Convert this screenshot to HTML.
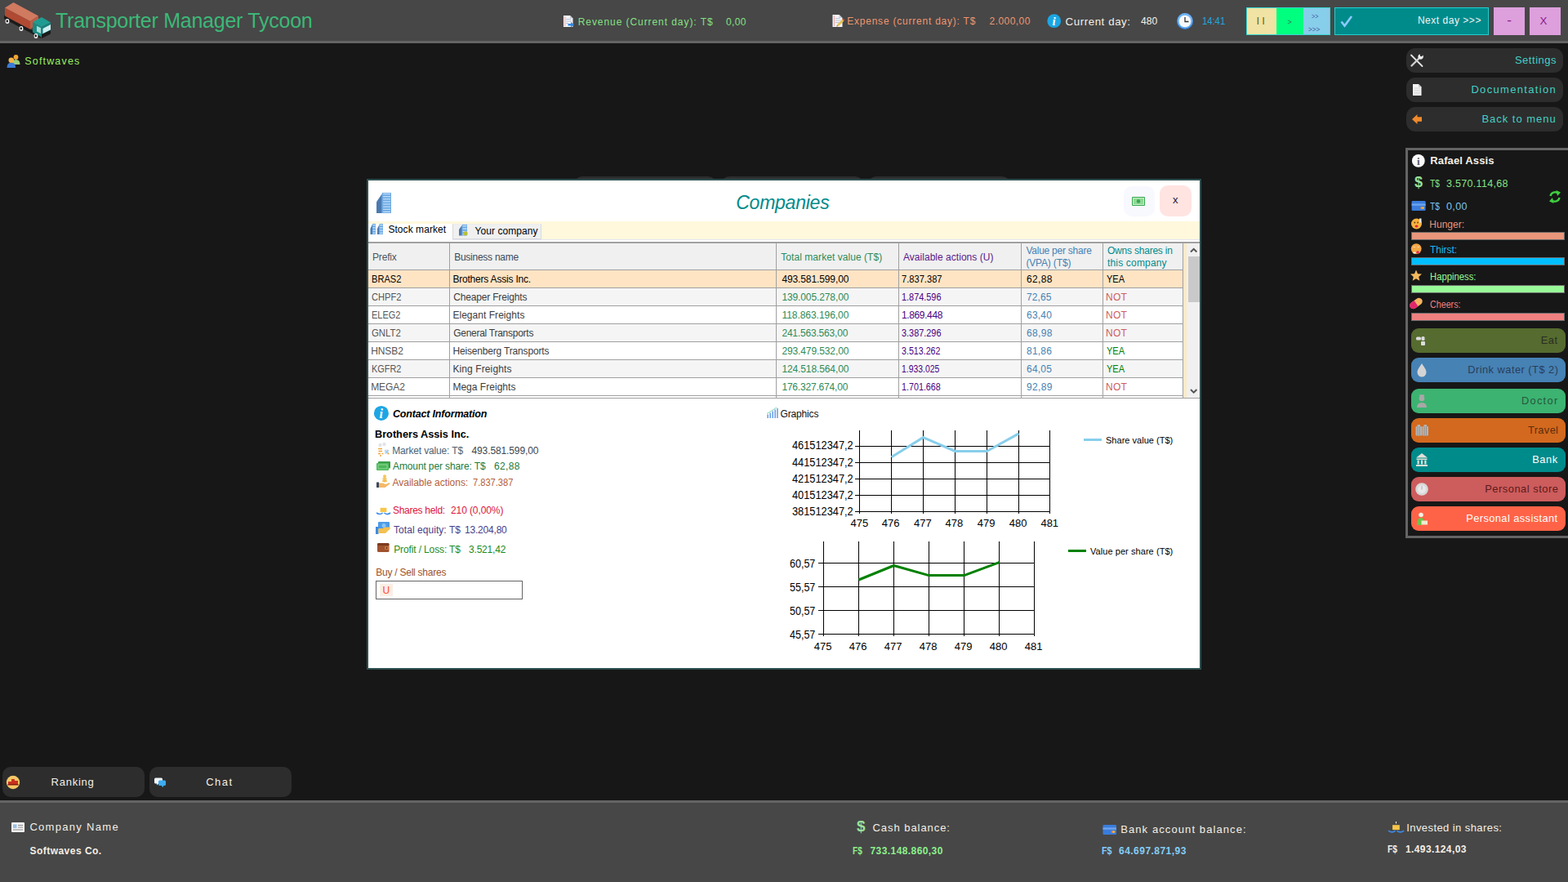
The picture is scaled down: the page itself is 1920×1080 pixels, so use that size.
<!DOCTYPE html>
<html lang="en"><head><meta charset="utf-8"><title>Transporter Manager Tycoon</title>
<style>
html,body{margin:0;padding:0}
body{width:1920px;height:1080px;overflow:hidden;background:#171717;position:relative;font-family:"Liberation Sans",sans-serif}
div,svg,span.t{position:absolute;display:block}
span.t{white-space:pre;line-height:20px;height:20px}
</style></head><body>
<div style="left:0px;top:0px;width:1920px;height:50px;background:#474747;"></div>
<div style="left:0px;top:50px;width:1920px;height:3px;background:#646464;"></div>
<span class="t" style="left:68.00px;top:15.34px;font-size:25px;color:#3cb878;letter-spacing:-0.252px;">Transporter Manager Tycoon</span>
<span class="t" style="left:707.70px;top:17.14px;font-size:12px;color:#84e184;letter-spacing:0.933px;">Revenue (Current day): T$</span>
<span class="t" style="left:889.00px;top:17.14px;font-size:12px;color:#84e184;letter-spacing:0.347px;">0,00</span>
<span class="t" style="left:1037.20px;top:16.34px;font-size:12px;color:#ee9670;letter-spacing:0.779px;">Expense (current day): T$</span>
<span class="t" style="left:1211.50px;top:16.34px;font-size:12px;color:#ee9670;letter-spacing:0.454px;">2.000,00</span>
<span class="t" style="left:1304.50px;top:17.19px;font-size:13.3px;color:#f4efe6;letter-spacing:0.578px;">Current day:</span>
<span class="t" style="left:1396.60px;top:16.29px;font-size:13.3px;color:#f4efe6;transform:scaleX(0.9099);transform-origin:0 50%;">480</span>
<span class="t" style="left:1471.80px;top:16.49px;font-size:13.3px;color:#22a7dc;transform:scaleX(0.8453);transform-origin:0 50%;">14:41</span>
<div style="left:1526px;top:9px;width:37px;height:34px;background:#f0e3a4;border:1px solid #38d6d0;border-right:0;box-sizing:border-box"></div>
<div style="left:1563px;top:9px;width:33px;height:34px;background:#00ff7f;border-top:1px solid #38d6d0;border-bottom:1px solid #38d6d0;box-sizing:border-box"></div>
<div style="left:1596px;top:9px;width:33px;height:34px;background:#87ceeb;border:1px solid #38d6d0;border-left:0;box-sizing:border-box"></div>
<div style="left:1634px;top:9px;width:189px;height:34px;background:#008b8b;border:1px solid #20d0d0;box-sizing:border-box"></div>
<div style="left:1829px;top:9px;width:38px;height:34px;background:#dda0dd;"></div>
<div style="left:1873px;top:9px;width:38px;height:34px;background:#dda0dd;"></div>
<span class="t" style="left:1538.50px;top:15.70px;font-size:13px;color:#5a6b22;letter-spacing:3.066px;">II</span>
<span class="t" style="left:1576.60px;top:16.68px;font-size:9px;color:#2f7a50;">&gt;</span>
<span class="t" style="left:1606.20px;top:10.08px;font-size:9px;color:#4a64a8;transform:scaleX(0.7950);transform-origin:0 50%;">&gt;&gt;</span>
<span class="t" style="left:1602.00px;top:25.58px;font-size:9px;color:#4a64a8;transform:scaleX(0.8996);transform-origin:0 50%;">&gt;&gt;&gt;</span>
<span class="t" style="left:1735.90px;top:15.34px;font-size:12px;color:#f4f4f4;letter-spacing:0.526px;">Next day &gt;&gt;&gt;</span>
<span class="t" style="left:1845.20px;top:15.11px;font-size:17px;color:#8b1a8b;">-</span>
<span class="t" style="left:1885.60px;top:15.99px;font-size:13.3px;color:#8b1a8b;">X</span>
<span class="t" style="left:30.30px;top:65.12px;font-size:12.5px;color:#98ee62;letter-spacing:1.160px;">Softwaves</span>
<div style="left:3px;top:939px;width:174px;height:37px;background:#2d2d2d;border-radius:10px"></div>
<div style="left:183px;top:939px;width:174px;height:37px;background:#2d2d2d;border-radius:10px"></div>
<span class="t" style="left:62.50px;top:948.20px;font-size:13px;color:#f4efe6;letter-spacing:0.766px;">Ranking</span>
<span class="t" style="left:252.20px;top:948.20px;font-size:13px;color:#f4efe6;letter-spacing:1.510px;">Chat</span>
<div style="left:0px;top:980px;width:1920px;height:3px;background:#646464;"></div>
<div style="left:0px;top:983px;width:1920px;height:97px;background:#474747;"></div>
<span class="t" style="left:36.40px;top:1003.20px;font-size:13px;color:#f4efe6;letter-spacing:1.306px;">Company Name</span>
<span class="t" style="left:36.40px;top:1032.34px;font-size:12px;color:#f4efe6;letter-spacing:0.481px;font-weight:bold;">Softwaves Co.</span>
<span class="t" style="left:1068.50px;top:1003.95px;font-size:13px;color:#f4efe6;letter-spacing:0.948px;">Cash balance:</span>
<span class="t" style="left:1044.35px;top:1031.94px;font-size:12px;color:#8cf08c;transform:scaleX(0.8413);transform-origin:0 50%;font-weight:bold;">F$</span>
<span class="t" style="left:1065.50px;top:1031.94px;font-size:12px;color:#8cf08c;letter-spacing:0.421px;font-weight:bold;">733.148.860,30</span>
<span class="t" style="left:1372.20px;top:1006.20px;font-size:13px;color:#f4efe6;letter-spacing:1.095px;">Bank account balance:</span>
<span class="t" style="left:1349.40px;top:1032.14px;font-size:12px;color:#84cdf5;transform:scaleX(0.8960);transform-origin:0 50%;font-weight:bold;">F$</span>
<span class="t" style="left:1370.00px;top:1032.14px;font-size:12px;color:#84cdf5;letter-spacing:0.471px;font-weight:bold;">64.697.871,93</span>
<span class="t" style="left:1722.20px;top:1003.95px;font-size:13px;color:#f4efe6;letter-spacing:0.426px;">Invested in shares:</span>
<span class="t" style="left:1699.35px;top:1030.29px;font-size:12px;color:#f4efe6;transform:scaleX(0.8549);transform-origin:0 50%;font-weight:bold;">F$</span>
<span class="t" style="left:1721.00px;top:1030.29px;font-size:12px;color:#f4efe6;letter-spacing:0.393px;font-weight:bold;">1.493.124,03</span>
<div style="left:1722px;top:59px;width:192px;height:30px;background:#2d2d2d;border-radius:11px"></div>
<span class="t" style="left:1854.90px;top:63.50px;font-size:13px;color:#45cfc4;letter-spacing:0.531px;">Settings</span>
<div style="left:1722px;top:95px;width:192px;height:30px;background:#2d2d2d;border-radius:11px"></div>
<span class="t" style="left:1801.40px;top:99.50px;font-size:13px;color:#45cfc4;letter-spacing:1.329px;">Documentation</span>
<div style="left:1722px;top:131px;width:192px;height:30px;background:#2d2d2d;border-radius:11px"></div>
<span class="t" style="left:1814.40px;top:135.50px;font-size:13px;color:#45cfc4;letter-spacing:0.991px;">Back to menu</span>
<div style="left:1721px;top:181px;width:210px;height:478px;background:#171717;border:3px solid #646464;box-sizing:border-box"></div>
<span class="t" style="left:1751.30px;top:187.20px;font-size:13px;color:#f4efe6;letter-spacing:0.123px;font-weight:bold;">Rafael Assis</span>
<span class="t" style="left:1751.00px;top:214.57px;font-size:12.5px;color:#86e386;transform:scaleX(0.8151);transform-origin:0 50%;">T$</span>
<span class="t" style="left:1771.00px;top:214.57px;font-size:12.5px;color:#86e386;letter-spacing:0.308px;">3.570.114,68</span>
<span class="t" style="left:1751.00px;top:242.67px;font-size:12.5px;color:#7cc4f2;transform:scaleX(0.8151);transform-origin:0 50%;">T$</span>
<span class="t" style="left:1771.00px;top:242.67px;font-size:12.5px;color:#7cc4f2;letter-spacing:0.369px;">0,00</span>
<span class="t" style="left:1750.20px;top:264.64px;font-size:12px;color:#e9967a;letter-spacing:0.049px;">Hunger:</span>
<span class="t" style="left:1751.00px;top:295.64px;font-size:12px;color:#1cb8f0;letter-spacing:-0.024px;">Thirst:</span>
<span class="t" style="left:1751.00px;top:328.64px;font-size:12px;color:#98fb98;transform:scaleX(0.9409);transform-origin:0 50%;">Happiness:</span>
<span class="t" style="left:1751.00px;top:362.74px;font-size:12px;color:#f08080;transform:scaleX(0.8920);transform-origin:0 50%;">Cheers:</span>
<div style="left:1728px;top:284px;width:188px;height:10px;background:#e9967a;border:1px solid #6a6a6a;box-sizing:border-box"></div>
<div style="left:1728px;top:315px;width:188px;height:10px;background:#00bfff;border:1px solid #6a6a6a;box-sizing:border-box"></div>
<div style="left:1728px;top:349px;width:188px;height:10px;background:#98fb98;border:1px solid #6a6a6a;box-sizing:border-box"></div>
<div style="left:1728px;top:383px;width:188px;height:10px;background:#f08080;border:1px solid #6a6a6a;box-sizing:border-box"></div>
<div style="left:1728px;top:402px;width:189px;height:30px;background:#556b2f;border-radius:9px"></div>
<span class="t" style="left:1886.70px;top:406.56px;font-size:12.8px;color:#2a2e22;letter-spacing:0.631px;">Eat</span>
<div style="left:1728px;top:438px;width:189px;height:30px;background:#4682b4;border-radius:9px"></div>
<span class="t" style="left:1797.20px;top:442.56px;font-size:12.8px;color:#2a3e58;letter-spacing:0.493px;">Drink water (T$ 2)</span>
<div style="left:1728px;top:476px;width:189px;height:30px;background:#3cb371;border-radius:9px"></div>
<span class="t" style="left:1862.90px;top:480.56px;font-size:12.8px;color:#26573c;letter-spacing:1.315px;">Doctor</span>
<div style="left:1728px;top:512px;width:189px;height:30px;background:#d2691e;border-radius:9px"></div>
<span class="t" style="left:1871.00px;top:516.56px;font-size:12.8px;color:#5a2d0c;letter-spacing:0.377px;">Travel</span>
<div style="left:1728px;top:548px;width:189px;height:30px;background:#008b8b;border-radius:9px"></div>
<span class="t" style="left:1876.20px;top:552.56px;font-size:12.8px;color:#ffffff;letter-spacing:0.603px;">Bank</span>
<div style="left:1728px;top:584px;width:189px;height:30px;background:#cd5c5c;border-radius:9px"></div>
<span class="t" style="left:1818.20px;top:588.56px;font-size:12.8px;color:#5c1a1a;letter-spacing:0.559px;">Personal store</span>
<div style="left:1728px;top:620px;width:189px;height:30px;background:#ff6347;border-radius:9px"></div>
<span class="t" style="left:1795.20px;top:624.56px;font-size:12.8px;color:#ffffff;letter-spacing:0.436px;">Personal assistant</span>
<div style="left:703px;top:216px;width:174px;height:37px;background:#2d2d2d;border-radius:10px"></div>
<div style="left:883px;top:216px;width:174px;height:37px;background:#2d2d2d;border-radius:10px"></div>
<div style="left:1063px;top:216px;width:174px;height:37px;background:#2d2d2d;border-radius:10px"></div>
<div style="left:449px;top:219px;width:1022px;height:601px;background:#ffffff;border:2px solid #2f4f4f;box-sizing:border-box"></div>
<span class="t" style="left:901.20px;top:237.63px;font-size:23px;color:#008b8b;letter-spacing:-0.230px;font-style:italic;">Companies</span>
<div style="left:1375.5px;top:227.5px;width:38.5px;height:37.5px;background:#f8f8ff;border-radius:10px"></div>
<div style="left:1420px;top:227px;width:39px;height:38px;background:#ffe4e1;border-radius:10px"></div>
<span class="t" style="left:1436.00px;top:235.40px;font-size:13px;color:#1a1a3a;">x</span>
<div style="left:451px;top:271px;width:1018px;height:22px;background:#fff8dc;"></div>
<div style="left:451px;top:274px;width:103px;height:22px;background:#ffffff;"></div>
<div style="left:554px;top:274px;width:109px;height:19px;background:#f0f0f0;border:1px solid #d9d9d9;border-top-color:#ececec;box-sizing:border-box"></div>
<div style="left:451px;top:293px;width:1018px;height:3px;background:#ffffff;"></div>
<div style="left:554px;top:293px;width:915px;height:1px;background:#e4e6f2;"></div>
<span class="t" style="left:475.40px;top:270.94px;font-size:12px;color:#000;letter-spacing:0.061px;">Stock market</span>
<span class="t" style="left:581.60px;top:273.04px;font-size:12px;color:#000;letter-spacing:0.065px;">Your company</span>
<div style="left:451px;top:296px;width:1018px;height:2px;background:#a0a0a0;"></div>
<div style="left:451px;top:298px;width:998px;height:32px;background:#f0f0f0;"></div>
<div style="left:451px;top:331px;width:998px;height:21px;background:#ffe4c4;"></div>
<div style="left:451px;top:352px;width:998px;height:1px;background:#a0a0a0;"></div>
<span class="t" style="left:455.00px;top:332.04px;font-size:12px;color:#000;transform:scaleX(0.9229);transform-origin:0 50%;">BRAS2</span>
<span class="t" style="left:554.40px;top:332.04px;font-size:12px;color:#000;letter-spacing:-0.199px;">Brothers Assis Inc.</span>
<span class="t" style="left:957.40px;top:332.04px;font-size:12px;color:#000;letter-spacing:-0.109px;">493.581.599,00</span>
<span class="t" style="left:1104.00px;top:332.04px;font-size:12px;color:#000;transform:scaleX(0.9273);transform-origin:0 50%;">7.837.387</span>
<span class="t" style="left:1257.00px;top:332.04px;font-size:12px;color:#000;letter-spacing:0.342px;">62,88</span>
<span class="t" style="left:1354.80px;top:332.04px;font-size:12px;color:#000;transform:scaleX(0.9178);transform-origin:0 50%;">YEA</span>
<div style="left:451px;top:353px;width:998px;height:21px;background:#f5f5f5;"></div>
<div style="left:451px;top:374px;width:998px;height:1px;background:#a0a0a0;"></div>
<span class="t" style="left:455.00px;top:354.04px;font-size:12px;color:#555555;transform:scaleX(0.9232);transform-origin:0 50%;">CHPF2</span>
<span class="t" style="left:555.20px;top:354.04px;font-size:12px;color:#3c3c3c;letter-spacing:-0.168px;">Cheaper Freights</span>
<span class="t" style="left:957.40px;top:354.04px;font-size:12px;color:#2e8b57;letter-spacing:-0.109px;">139.005.278,00</span>
<span class="t" style="left:1104.00px;top:354.04px;font-size:12px;color:#4b0082;transform:scaleX(0.9083);transform-origin:0 50%;">1.874.596</span>
<span class="t" style="left:1257.00px;top:354.04px;font-size:12px;color:#4682b4;letter-spacing:0.092px;">72,65</span>
<span class="t" style="left:1354.00px;top:354.04px;font-size:12px;color:#cd5c5c;letter-spacing:0.278px;">NOT</span>
<div style="left:451px;top:375px;width:998px;height:21px;background:#ffffff;"></div>
<div style="left:451px;top:396px;width:998px;height:1px;background:#a0a0a0;"></div>
<span class="t" style="left:455.00px;top:376.04px;font-size:12px;color:#555555;transform:scaleX(0.9122);transform-origin:0 50%;">ELEG2</span>
<span class="t" style="left:554.40px;top:376.04px;font-size:12px;color:#3c3c3c;letter-spacing:0.041px;">Elegant Freights</span>
<span class="t" style="left:957.40px;top:376.04px;font-size:12px;color:#2e8b57;letter-spacing:-0.041px;">118.863.196,00</span>
<span class="t" style="left:1104.00px;top:376.04px;font-size:12px;color:#4b0082;letter-spacing:-0.374px;">1.869.448</span>
<span class="t" style="left:1257.00px;top:376.04px;font-size:12px;color:#4682b4;letter-spacing:0.217px;">63,40</span>
<span class="t" style="left:1354.00px;top:376.04px;font-size:12px;color:#cd5c5c;letter-spacing:0.278px;">NOT</span>
<div style="left:451px;top:397px;width:998px;height:21px;background:#f5f5f5;"></div>
<div style="left:451px;top:418px;width:998px;height:1px;background:#a0a0a0;"></div>
<span class="t" style="left:455.00px;top:398.04px;font-size:12px;color:#555555;transform:scaleX(0.9490);transform-origin:0 50%;">GNLT2</span>
<span class="t" style="left:555.20px;top:398.04px;font-size:12px;color:#3c3c3c;letter-spacing:-0.266px;">General Transports</span>
<span class="t" style="left:957.40px;top:398.04px;font-size:12px;color:#2e8b57;letter-spacing:-0.186px;">241.563.563,00</span>
<span class="t" style="left:1104.00px;top:398.04px;font-size:12px;color:#4b0082;transform:scaleX(0.9083);transform-origin:0 50%;">3.387.296</span>
<span class="t" style="left:1257.00px;top:398.04px;font-size:12px;color:#4682b4;letter-spacing:0.342px;">68,98</span>
<span class="t" style="left:1354.00px;top:398.04px;font-size:12px;color:#cd5c5c;letter-spacing:0.278px;">NOT</span>
<div style="left:451px;top:419px;width:998px;height:21px;background:#ffffff;"></div>
<div style="left:451px;top:440px;width:998px;height:1px;background:#a0a0a0;"></div>
<span class="t" style="left:454.20px;top:420.04px;font-size:12px;color:#555555;letter-spacing:-0.079px;">HNSB2</span>
<span class="t" style="left:554.40px;top:420.04px;font-size:12px;color:#3c3c3c;letter-spacing:-0.170px;">Heisenberg Transports</span>
<span class="t" style="left:957.40px;top:420.04px;font-size:12px;color:#2e8b57;letter-spacing:-0.109px;">293.479.532,00</span>
<span class="t" style="left:1104.00px;top:420.04px;font-size:12px;color:#4b0082;transform:scaleX(0.8896);transform-origin:0 50%;">3.513.262</span>
<span class="t" style="left:1257.00px;top:420.04px;font-size:12px;color:#4682b4;letter-spacing:0.217px;">81,86</span>
<span class="t" style="left:1354.80px;top:420.04px;font-size:12px;color:#008000;transform:scaleX(0.9178);transform-origin:0 50%;">YEA</span>
<div style="left:451px;top:441px;width:998px;height:21px;background:#f5f5f5;"></div>
<div style="left:451px;top:462px;width:998px;height:1px;background:#a0a0a0;"></div>
<span class="t" style="left:455.00px;top:442.04px;font-size:12px;color:#555555;transform:scaleX(0.9077);transform-origin:0 50%;">KGFR2</span>
<span class="t" style="left:554.40px;top:442.04px;font-size:12px;color:#3c3c3c;letter-spacing:0.108px;">King Freights</span>
<span class="t" style="left:957.40px;top:442.04px;font-size:12px;color:#2e8b57;letter-spacing:-0.109px;">124.518.564,00</span>
<span class="t" style="left:1104.00px;top:442.04px;font-size:12px;color:#4b0082;transform:scaleX(0.8675);transform-origin:0 50%;">1.933.025</span>
<span class="t" style="left:1257.00px;top:442.04px;font-size:12px;color:#4682b4;letter-spacing:0.217px;">64,05</span>
<span class="t" style="left:1354.80px;top:442.04px;font-size:12px;color:#008000;transform:scaleX(0.9178);transform-origin:0 50%;">YEA</span>
<div style="left:451px;top:463px;width:998px;height:21px;background:#ffffff;"></div>
<div style="left:451px;top:484px;width:998px;height:1px;background:#a0a0a0;"></div>
<span class="t" style="left:454.20px;top:464.04px;font-size:12px;color:#555555;letter-spacing:-0.079px;">MEGA2</span>
<span class="t" style="left:554.40px;top:464.04px;font-size:12px;color:#3c3c3c;letter-spacing:0.025px;">Mega Freights</span>
<span class="t" style="left:957.40px;top:464.04px;font-size:12px;color:#2e8b57;letter-spacing:-0.186px;">176.327.674,00</span>
<span class="t" style="left:1104.00px;top:464.04px;font-size:12px;color:#4b0082;transform:scaleX(0.8953);transform-origin:0 50%;">1.701.668</span>
<span class="t" style="left:1257.00px;top:464.04px;font-size:12px;color:#4682b4;letter-spacing:0.342px;">92,89</span>
<span class="t" style="left:1354.00px;top:464.04px;font-size:12px;color:#cd5c5c;letter-spacing:0.278px;">NOT</span>
<div style="left:451px;top:485px;width:998px;height:2px;background:#ffffff;"></div>
<div style="left:550px;top:298px;width:1px;height:189px;background:#a0a0a0;"></div>
<div style="left:950px;top:298px;width:1px;height:189px;background:#a0a0a0;"></div>
<div style="left:1100px;top:298px;width:1px;height:189px;background:#a0a0a0;"></div>
<div style="left:1250px;top:298px;width:1px;height:189px;background:#a0a0a0;"></div>
<div style="left:1350px;top:298px;width:1px;height:189px;background:#a0a0a0;"></div>
<div style="left:1448px;top:298px;width:1px;height:189px;background:#a0a0a0;"></div>
<div style="left:451px;top:330px;width:998px;height:1px;background:#a0a0a0;"></div>
<div style="left:451px;top:487px;width:1018px;height:1px;background:#a0a0a0;"></div>
<div style="left:1449px;top:298px;width:4px;height:189px;background:#ffe9c8;"></div>
<div style="left:1453px;top:298px;width:16px;height:189px;background:#f0f0f0;"></div>
<div style="left:1454.5px;top:314px;width:14.5px;height:56px;background:#c9c9c9;"></div>
<svg style="left:1453px;top:298px" width="16" height="16" viewBox="0 0 16 16"><path d="M5 10.5 L8.7 6.8 L12.4 10.5" fill="none" stroke="#555" stroke-width="2"/></svg>
<svg style="left:1453px;top:471px" width="16" height="16" viewBox="0 0 16 16"><path d="M5 6 L8.7 9.7 L12.4 6" fill="none" stroke="#555" stroke-width="2"/></svg>
<span class="t" style="left:456.00px;top:304.84px;font-size:12px;color:#4a5560;letter-spacing:-0.178px;">Prefix</span>
<span class="t" style="left:556.20px;top:304.84px;font-size:12px;color:#3c4a58;letter-spacing:-0.254px;">Business name</span>
<span class="t" style="left:956.30px;top:304.84px;font-size:12px;color:#2e8b57;letter-spacing:0.054px;">Total market value (T$)</span>
<span class="t" style="left:1106.00px;top:304.84px;font-size:12px;color:#5a1a8a;letter-spacing:0.029px;">Available actions (U)</span>
<span class="t" style="left:1256.40px;top:297.14px;font-size:12px;color:#4682b4;letter-spacing:-0.239px;">Value per share</span>
<span class="t" style="left:1256.40px;top:312.04px;font-size:12px;color:#4682b4;letter-spacing:-0.161px;">(VPA) (T$)</span>
<span class="t" style="left:1356.00px;top:297.14px;font-size:12px;color:#008b8b;letter-spacing:-0.216px;">Owns shares in</span>
<span class="t" style="left:1356.00px;top:312.04px;font-size:12px;color:#008b8b;letter-spacing:0.172px;">this company</span>
<span class="t" style="left:481.00px;top:496.97px;font-size:12.5px;color:#000;letter-spacing:-0.183px;font-weight:bold;font-style:italic;">Contact Information</span>
<span class="t" style="left:459.30px;top:522.12px;font-size:13.5px;color:#000;transform:scaleX(0.9413);transform-origin:0 50%;font-weight:bold;">Brothers Assis Inc.</span>
<span class="t" style="left:480.20px;top:541.64px;font-size:12px;color:#4a6274;letter-spacing:-0.150px;">Market value: T$</span>
<span class="t" style="left:577.50px;top:541.64px;font-size:12px;color:#3c4650;letter-spacing:-0.117px;">493.581.599,00</span>
<span class="t" style="left:481.00px;top:561.29px;font-size:12px;color:#1e7a3c;letter-spacing:-0.118px;">Amount per share: T$</span>
<span class="t" style="left:605.00px;top:561.29px;font-size:12px;color:#1e7a3c;letter-spacing:0.342px;">62,88</span>
<span class="t" style="left:480.60px;top:580.94px;font-size:12px;color:#b5603a;letter-spacing:-0.034px;">Available actions:</span>
<span class="t" style="left:579.00px;top:580.94px;font-size:12px;color:#b5603a;transform:scaleX(0.9235);transform-origin:0 50%;">7.837.387</span>
<span class="t" style="left:481.00px;top:615.29px;font-size:12px;color:#dc143c;letter-spacing:-0.290px;">Shares held:</span>
<span class="t" style="left:552.00px;top:615.29px;font-size:12px;color:#dc143c;letter-spacing:-0.097px;">210 (0,00%)</span>
<span class="t" style="left:482.00px;top:638.74px;font-size:12px;color:#483d8b;letter-spacing:0.055px;">Total equity: T$</span>
<span class="t" style="left:569.00px;top:638.74px;font-size:12px;color:#483d8b;letter-spacing:-0.199px;">13.204,80</span>
<span class="t" style="left:482.20px;top:662.54px;font-size:12px;color:#1c8c1c;letter-spacing:-0.126px;">Profit / Loss: T$</span>
<span class="t" style="left:574.00px;top:662.54px;font-size:12px;color:#1c8c1c;letter-spacing:-0.188px;">3.521,42</span>
<span class="t" style="left:460.20px;top:690.94px;font-size:12px;color:#a0522d;letter-spacing:-0.240px;">Buy / Sell shares</span>
<div style="left:460px;top:711px;width:180px;height:23px;background:#ffffff;border:1px solid #646464;box-sizing:border-box"></div>
<div style="left:465px;top:715px;width:16px;height:15px;background:#faeee4;"></div>
<span class="t" style="left:468.50px;top:713.44px;font-size:12px;color:#ff4a2a;">U</span>
<span class="t" style="left:955.50px;top:496.64px;font-size:12px;color:#111;letter-spacing:-0.162px;">Graphics</span>
<svg style="left:0;top:0" width="1920" height="1080" viewBox="0 0 1920 1080"><rect x="1052" y="527" width="1" height="102" fill="#000"/><rect x="1091" y="527" width="1" height="102" fill="#000"/><rect x="1130" y="527" width="1" height="102" fill="#000"/><rect x="1169" y="527" width="1" height="102" fill="#000"/><rect x="1208" y="527" width="1" height="102" fill="#000"/><rect x="1247" y="527" width="1" height="102" fill="#000"/><rect x="1285" y="527" width="1" height="102" fill="#000"/><rect x="1047" y="546" width="239" height="1" fill="#000"/><rect x="1047" y="566" width="239" height="1" fill="#000"/><rect x="1047" y="586" width="239" height="1" fill="#000"/><rect x="1047" y="606" width="239" height="1" fill="#000"/><rect x="1047" y="626" width="239" height="1" fill="#000"/><polyline points="1091.5,559.75 1130.5,535.6 1169.5,552.5 1208.5,552.5 1247.5,530.9" fill="none" stroke="#87ceeb" stroke-width="3" stroke-linejoin="round"/><rect x="1327" y="537" width="22" height="3" fill="#87ceeb"/><rect x="1008" y="663" width="1" height="116" fill="#000"/><rect x="1051" y="663" width="1" height="116" fill="#000"/><rect x="1094" y="663" width="1" height="116" fill="#000"/><rect x="1137" y="663" width="1" height="116" fill="#000"/><rect x="1180" y="663" width="1" height="116" fill="#000"/><rect x="1223" y="663" width="1" height="116" fill="#000"/><rect x="1266" y="663" width="1" height="116" fill="#000"/><rect x="1002" y="689" width="265" height="1" fill="#000"/><rect x="1002" y="718" width="265" height="1" fill="#000"/><rect x="1002" y="747" width="265" height="1" fill="#000"/><rect x="1002" y="776" width="265" height="1" fill="#000"/><polyline points="1051.5,710 1094.5,692.5 1137.5,704.6 1180.5,704.6 1223.5,688.7" fill="none" stroke="#008000" stroke-width="3" stroke-linejoin="round"/><rect x="1308" y="673" width="22" height="3" fill="#008000"/></svg>
<span class="t" style="left:970.00px;top:535.35px;font-size:14px;color:#000;transform:scaleX(0.9135);transform-origin:0 50%;">461512347,2</span>
<span class="t" style="left:970.00px;top:556.05px;font-size:14px;color:#000;transform:scaleX(0.9135);transform-origin:0 50%;">441512347,2</span>
<span class="t" style="left:970.00px;top:576.05px;font-size:14px;color:#000;transform:scaleX(0.9135);transform-origin:0 50%;">421512347,2</span>
<span class="t" style="left:970.00px;top:596.05px;font-size:14px;color:#000;transform:scaleX(0.9135);transform-origin:0 50%;">401512347,2</span>
<span class="t" style="left:970.00px;top:616.05px;font-size:14px;color:#000;transform:scaleX(0.9135);transform-origin:0 50%;">381512347,2</span>
<span class="t" style="left:1041.60px;top:631.20px;font-size:13px;color:#000;">475</span>
<span class="t" style="left:1079.87px;top:631.20px;font-size:13px;color:#000;">476</span>
<span class="t" style="left:1118.94px;top:631.20px;font-size:13px;color:#000;">477</span>
<span class="t" style="left:1157.61px;top:631.20px;font-size:13px;color:#000;">478</span>
<span class="t" style="left:1196.68px;top:631.20px;font-size:13px;color:#000;">479</span>
<span class="t" style="left:1235.75px;top:631.20px;font-size:13px;color:#000;">480</span>
<span class="t" style="left:1274.42px;top:631.20px;font-size:13px;color:#000;">481</span>
<span class="t" style="left:967.30px;top:679.90px;font-size:14px;color:#000;transform:scaleX(0.8937);transform-origin:0 50%;">60,57</span>
<span class="t" style="left:967.30px;top:709.05px;font-size:14px;color:#000;transform:scaleX(0.8937);transform-origin:0 50%;">55,57</span>
<span class="t" style="left:967.30px;top:738.15px;font-size:14px;color:#000;transform:scaleX(0.8937);transform-origin:0 50%;">50,57</span>
<span class="t" style="left:967.30px;top:767.15px;font-size:14px;color:#000;transform:scaleX(0.8937);transform-origin:0 50%;">45,57</span>
<span class="t" style="left:996.80px;top:781.90px;font-size:13px;color:#000;">475</span>
<span class="t" style="left:1039.80px;top:781.90px;font-size:13px;color:#000;">476</span>
<span class="t" style="left:1082.80px;top:781.90px;font-size:13px;color:#000;">477</span>
<span class="t" style="left:1125.80px;top:781.90px;font-size:13px;color:#000;">478</span>
<span class="t" style="left:1168.80px;top:781.90px;font-size:13px;color:#000;">479</span>
<span class="t" style="left:1211.80px;top:781.90px;font-size:13px;color:#000;">480</span>
<span class="t" style="left:1254.80px;top:781.90px;font-size:13px;color:#000;">481</span>
<span class="t" style="left:1354.00px;top:528.69px;font-size:11px;color:#000;letter-spacing:0.024px;">Share value (T$)</span>
<span class="t" style="left:1335.00px;top:664.89px;font-size:11px;color:#000;letter-spacing:0.064px;">Value per share (T$)</span>
<span class="t" style="left:1732.00px;top:212.66px;font-size:18px;color:#9be09b;font-weight:bold;">$</span>
<span class="t" style="left:1049.00px;top:1002.42px;font-size:19px;color:#9be09b;font-weight:bold;">$</span>
<svg style="left:0;top:0" width="1920" height="1080" viewBox="0 0 1920 1080"><g>
<polygon points="5,18.5 50,42.5 50,47 5,23" fill="#1b1b1b"/>
<polygon points="6,9.5 37,26 37,36 6,19.5" fill="#b04a32"/>
<polygon points="6,9.5 16.5,3 47,19.5 37,26" fill="#d07a60"/>
<polygon points="37,26 47,19.5 47,28 37,36" fill="#c05c44"/>
<polygon points="40,27 51,33 51,45.5 40,39.5" fill="#1a8a82"/>
<polygon points="40,27 51,21 62,27.5 51,33" fill="#1f9c92"/>
<polygon points="51,33 62,27.5 62,40 51,46" fill="#17807a"/>
<polygon points="45,31.8 50,34.3 50,41 45,38.5" fill="#a6dcd8"/>
<polygon points="52.5,35 62,30 62,36.2 52.5,41.2" fill="#cfeef0"/>
<polygon points="51,42 62,37 62,41.5 51,47" fill="#1b1b1b"/>
<ellipse cx="9" cy="26" rx="2.4" ry="3" fill="#f4f4f4"/><ellipse cx="8.8" cy="25.8" rx="1.2" ry="1.6" fill="#111"/>
<ellipse cx="26" cy="35" rx="2.4" ry="3" fill="#f4f4f4"/><ellipse cx="25.8" cy="34.8" rx="1.2" ry="1.6" fill="#111"/>
<ellipse cx="44" cy="44" rx="2.4" ry="3" fill="#f4f4f4"/><ellipse cx="43.8" cy="43.8" rx="1.2" ry="1.6" fill="#111"/>
</g><g>
<path d="M14.5 79 q0 -6 5 -6 q5 0 5 6z" fill="#9ccc7a"/><circle cx="19.5" cy="70" r="2.9" fill="#f2a434"/>
<path d="M8.5 83 q0 -6.5 5.3 -6.5 q5.3 0 5.3 6.5z" fill="#3d7ad6"/><circle cx="13.8" cy="73.8" r="3.3" fill="#f6b446"/>
</g><g><path d="M690 19 h8 l3.5 3.5 v10.5 h-11.5z" fill="#f2f4f8"/><path d="M698 19 v3.5 h3.5z" fill="#c8ccd4"/>
<rect x="691.3" y="20" width="1" height="12" fill="#f0a8a8"/>
<path d="M693 23.5h6M693 26h7M693 28.500h3" stroke="#b8c4d8" stroke-width="1"/>
<path d="M695.5 29 h3.500 v-2 l4 3.200 l-4 3.200 v-2 h-3.500z" fill="#2e8ae4"/></g><g><path d="M1019.500 18 h8 l4 4 v11 h-12z" fill="#f2f4f8"/><path d="M1027.500 18 v4 h4z" fill="#c8ccd4"/>
<rect x="1021" y="19" width="1" height="13" fill="#f0a8a8"/>
<path d="M1022.500 22.500h6M1022.500 25h7M1022.500 27.500h5" stroke="#b8c4d8" stroke-width="1"/>
<path d="M1024.500 32.500 l1 -3 l6 -6 l2 2 l-6 6z" fill="#e8c050"/><path d="M1031.500 23.500 l1 -1 l2 2 l-1 1z" fill="#e04030"/><path d="M1024.500 32.500 l0.400 -1.400 l1 1z" fill="#333"/></g><g><circle cx="1290.7" cy="25.700" r="8.4" fill="#1ca6e4"/>
<text x="1290.500" y="31" font-family="Liberation Serif, serif" font-style="italic" font-weight="bold" font-size="15" fill="#fff" text-anchor="middle">i</text></g><g><circle cx="1451" cy="26" r="10" fill="#3b86dc"/><circle cx="1451" cy="25.200" r="9.200" fill="#6fb4f4"/><circle cx="1451" cy="26" r="7.300" fill="#f6f8fa"/>
<path d="M1451 21 v5.500 h4.500" fill="none" stroke="#333" stroke-width="1.300"/></g><path d="M1642.500 26.500 L1646.500 31.500 L1655 20" fill="none" stroke="#8ccaff" stroke-width="2.600"/><g><circle cx="16" cy="958" r="8.200" fill="#f4c866"/>
<path d="M10 957 h4 v-3 h4 v2 h4 v5 h-12z" fill="#c8321e"/><rect x="9.500" y="960" width="13" height="1.500" fill="#8a1a10"/></g><g><path d="M190.500 952.500 h7 q1.500 0 1.500 1.500 v4 q0 1.500 -1.500 1.500 h-3.500 l-2 2 v-2 h-1.500 q-1.500 0 -1.500 -1.500 v-4 q0 -1.500 1.500 -1.500z" fill="#f0f4f8"/>
<path d="M195.500 955.500 h6 q1.500 0 1.500 1.500 v3.500 q0 1.500 -1.500 1.500 h-1 l-1.500 2.300 l-1 -2.300 h-2.500 q-1.500 0 -1.500 -1.500 v-3.500 q0 -1.500 1.500 -1.500z" fill="#3cacf0"/></g><g><rect x="14" y="1007" width="16" height="12" rx="1" fill="#f4f4f4"/><rect x="16" y="1009.500" width="4.500" height="4.500" fill="#9cc0e4"/>
<path d="M22 1010.500h6M22 1013h6M16 1016h12" stroke="#8a8a8a" stroke-width="1"/></g><g><rect x="1350.5" y="1010" width="16.5" height="12" rx="1.200" fill="#3a7cdc"/><rect x="1350.5" y="1013.4" width="16.5" height="2.4" fill="#6ea4ee"/><circle cx="1362.4" cy="1018.6" r="1.500" fill="#f08a3c"/><circle cx="1364.0" cy="1018.6" r="1.300" fill="#f4c040"/></g><g><rect x="1728.6" y="246" width="17" height="12" rx="1.200" fill="#3a7cdc"/><rect x="1728.6" y="249.4" width="17" height="2.4" fill="#6ea4ee"/><circle cx="1740.8" cy="254.6" r="1.500" fill="#f08a3c"/><circle cx="1742.5" cy="254.6" r="1.300" fill="#f4c040"/></g><g><rect x="1705.1" y="1010.2" width="8.7" height="5.9" fill="#f6c64a"/><path d="M1700 1017.2 q4.8 3.5 8.6 0 M1710.5 1017.2 q4.2 3.5 8.6 0" fill="none" stroke="#3c8ce8" stroke-width="1.600"/><path d="M1709.5 1006 v2.5" stroke="#f4f4f4" stroke-width="1"/></g><g><path d="M1728 67.500 L1741.500 81" stroke="#e6e6e6" stroke-width="1.800" stroke-linecap="round"/>
<path d="M1728.500 80.500 L1738 71" stroke="#d0d0d0" stroke-width="2.400" stroke-linecap="round"/>
<path d="M1742.300 67.500 a3.300 3.300 0 1 1 -3.800 -1.200 l0.500 2.400 l2 0.500z" fill="#f0f0f0"/></g><g><path d="M1730 103 h7 l3.500 3.500 v10.500 h-10.500z" fill="#f4f4f4"/><path d="M1737 103 v3.500 h3.500z" fill="#c4c4c4"/>
<path d="M1731.500 108h7.500M1731.500 110.500h7.500M1731.500 113h7.500M1731.500 115.200h7.500" stroke="#d0d0d0" stroke-width="0.900"/></g><polygon points="1729,146 1735.500,140 1735.500,143.300 1741,143.300 1741,148.700 1735.500,148.700 1735.500,152" fill="#f08a2c"/><g><circle cx="1736.800" cy="196.900" r="7.900" fill="#fafafa"/>
<text x="1736.800" y="201.500" font-family="Liberation Serif, serif" font-weight="bold" font-size="13" fill="#5a5a5a" text-anchor="middle">i</text></g><g fill="none" stroke="#3fcf3f" stroke-width="2.400"><path d="M1898.500 240 a5.600 5.600 0 0 1 9.500 -3"/><path d="M1909.500 242 a5.600 5.600 0 0 1 -9.500 3"/></g>
<path d="M1905.500 233 l5.500 2.500 l-4 4.500z" fill="#3fcf3f"/><path d="M1902.500 249 l-5.500 -2.500 l4 -4.500z" fill="#3fcf3f"/><g><circle cx="1734.500" cy="274" r="6.500" fill="#f6b23e"/><circle cx="1732.300" cy="272.500" r="0.900" fill="#5a3a10"/><circle cx="1736" cy="272.500" r="0.900" fill="#5a3a10"/>
<ellipse cx="1734.500" cy="277" rx="2" ry="1.600" fill="#e02838"/><rect x="1738" y="267.500" width="2.500" height="5" fill="#e8e8e8"/></g><g><circle cx="1734.200" cy="304.600" r="6.400" fill="#f4a848"/><path d="M1730.500 302.500h2.500M1735.500 302.500h2.500" stroke="#f8d8a0" stroke-width="1"/>
<ellipse cx="1736" cy="309" rx="1.800" ry="1.800" fill="#e8285a"/><ellipse cx="1732" cy="309.500" rx="1.800" ry="1" fill="#f8f0e0"/></g><polygon points="1734,330.500 1736,335.200 1741,335.600 1737.200,338.900 1738.400,343.800 1734,341.200 1729.600,343.800 1730.800,338.900 1727,335.600 1732,335.200" fill="#f6b85e"/><g transform="rotate(-35 1734 371.500)"><rect x="1725.500" y="367.300" width="17" height="8.400" rx="4.200" fill="#f4b460"/>
<path d="M1734 367.300 h-4.300 a4.200 4.200 0 0 0 0 8.400 h4.300z" fill="#e2266e"/></g><g fill="#dcdcdc"><rect x="1734" y="412.500" width="6" height="4" rx="1.500"/><rect x="1740.500" y="412" width="4" height="5" rx="1.500"/><rect x="1740" y="418" width="5" height="5" rx="1"/></g><path d="M1741 445 c2.500 4 5.500 7.500 5.500 11 a5.500 5.500 0 0 1 -11 0 c0 -3.500 3 -7 5.500 -11z" fill="#d4d4d4"/><g fill="#a8a8a8"><circle cx="1741" cy="488" r="3.300"/><rect x="1738" y="483.300" width="6" height="2.500" rx="1"/><path d="M1735 499 q0 -6 6 -6 q6 0 6 6z"/></g><g fill="#b4b4b4"><rect x="1733.500" y="522" width="7.500" height="11.500" rx="1"/><rect x="1741.500" y="522" width="7.500" height="11.500" rx="1"/><rect x="1735.500" y="520" width="3.500" height="2"/><rect x="1743.500" y="520" width="3.500" height="2"/></g>
<path d="M1736 522v11.500M1738.500 522v11.500M1744 522v11.500M1746.500 522v11.500" stroke="#8c8c8c" stroke-width="0.800"/><g fill="#e4e0d8"><polygon points="1734,560.500 1741,555 1748,560.500"/><rect x="1734.500" y="561.500" width="13" height="1.500"/>
<rect x="1735.500" y="563.500" width="2.200" height="5"/><rect x="1739.900" y="563.500" width="2.200" height="5"/><rect x="1744.300" y="563.500" width="2.200" height="5"/><rect x="1734" y="569" width="14" height="2"/></g><circle cx="1741" cy="599" r="7.800" fill="#d8d8d8"/><circle cx="1741" cy="599" r="5" fill="#e8e8e8"/><path d="M1741 595v4.500" stroke="#b0b0b0" stroke-width="1"/><g><circle cx="1740" cy="630.500" r="2.800" fill="#f4f0e4"/><path d="M1735 643 q0 -9 5 -9 q3 0 4 5 l-3 4z" fill="#6cc44a"/><rect x="1740.500" y="637.500" width="7.500" height="5" fill="#f0ead0"/></g><g><polygon points="461,247.2 467.8,237.2 467.8,261 461,261" fill="#4c7aae"/><rect x="467.8" y="236" width="11.2" height="25" fill="#6eaae4"/><rect x="469.1" y="236.9" width="9.0" height="1.2" fill="#c4e0f8"/><rect x="469.1" y="240.1" width="9.0" height="1.2" fill="#c4e0f8"/><rect x="469.1" y="243.2" width="9.0" height="1.2" fill="#c4e0f8"/><rect x="469.1" y="246.3" width="9.0" height="1.2" fill="#c4e0f8"/><rect x="469.1" y="249.4" width="9.0" height="1.2" fill="#c4e0f8"/><rect x="469.1" y="252.6" width="9.0" height="1.2" fill="#c4e0f8"/><rect x="469.1" y="255.7" width="9.0" height="1.2" fill="#c4e0f8"/><rect x="469.1" y="258.8" width="9.0" height="1.2" fill="#c4e0f8"/></g><g><polygon points="453.5,279.9 456.0,274.6 456.0,287 453.5,287" fill="#4c7aae"/><rect x="456.0" y="274" width="4.0" height="13" fill="#6eaae4"/><rect x="456.4" y="275.0" width="3.2" height="1.3" fill="#c4e0f8"/><rect x="456.4" y="278.2" width="3.2" height="1.3" fill="#c4e0f8"/><rect x="456.4" y="281.5" width="3.2" height="1.3" fill="#c4e0f8"/><rect x="456.4" y="284.7" width="3.2" height="1.3" fill="#c4e0f8"/></g><g><polygon points="462,279.9 464.7,274.6 464.7,287 462,287" fill="#4c7aae"/><rect x="464.7" y="274" width="4.3" height="13" fill="#6eaae4"/><rect x="465.1" y="275.0" width="3.5" height="1.3" fill="#c4e0f8"/><rect x="465.1" y="278.2" width="3.5" height="1.3" fill="#c4e0f8"/><rect x="465.1" y="281.5" width="3.5" height="1.3" fill="#c4e0f8"/><rect x="465.1" y="284.7" width="3.5" height="1.3" fill="#c4e0f8"/></g><g><polygon points="562,281.1 565.8,275.7 565.8,288.5 562,288.5" fill="#4c7aae"/><rect x="565.8" y="275" width="6.2" height="13.5" fill="#6eaae4"/><rect x="566.5" y="276.0" width="5.0" height="1.4" fill="#c4e0f8"/><rect x="566.5" y="279.4" width="5.0" height="1.4" fill="#c4e0f8"/><rect x="566.5" y="282.8" width="5.0" height="1.4" fill="#c4e0f8"/><rect x="566.5" y="286.1" width="5.0" height="1.4" fill="#c4e0f8"/><circle cx="570.0" cy="285.8" r="2.6" fill="#b8c038"/></g><g><rect x="1386" y="241" width="16" height="11" rx="1" fill="#35a850"/><rect x="1387.500" y="242.500" width="13" height="8" fill="#8fd896" stroke="#c8f0c8" stroke-width="1"/><circle cx="1394" cy="246.500" r="2.200" fill="#3aa450"/></g><g><circle cx="466.900" cy="505.900" r="9" fill="#1ca6e4"/>
<text x="466.700" y="511.500" font-family="Liberation Serif, serif" font-style="italic" font-weight="bold" font-size="16" fill="#fff" text-anchor="middle">i</text></g><g><circle cx="465.500" cy="545" r="2.200" fill="#e2e4e8"/><circle cx="470.500" cy="544" r="2.200" fill="#e2e4e8"/><path d="M463 549.500h5M463.500 552.500h4.500M463 555.500h3M467.500 555.500h2M465 558h2" stroke="#f0a83c" stroke-width="1.700"/><circle cx="473.500" cy="553" r="3" fill="#dfe8f2"/><path d="M471.500 551.500l4 3.500M475.500 551l-3.500 4.500" stroke="#6cb4e0" stroke-width="0.800"/><circle cx="475.500" cy="555.500" r="1" fill="#f0a83c"/></g><g><rect x="463" y="565" width="15" height="8.500" rx="1" fill="#3a9e48"/><rect x="461" y="567" width="15" height="9" rx="1" fill="#4cb85a"/><rect x="463" y="569" width="11" height="5" fill="none" stroke="#8cd894" stroke-width="1"/></g><g><rect x="461" y="590.500" width="3" height="6.500" fill="#3c4a5c"/><path d="M464 591.500 h5 l3 1.500 l5 -2 l0.500 1.500 l-6 4.500 h-7.500z" fill="#f4b868"/><ellipse cx="471" cy="589" rx="3" ry="1.400" fill="#f4bc50"/><ellipse cx="471" cy="586.500" rx="2.800" ry="1.400" fill="#f6c458"/><circle cx="471" cy="583.300" r="2" fill="#f6c458"/></g><g><rect x="465.6" y="621.8" width="7.8" height="5.2" fill="#f6c64a"/><path d="M461 628.0 q4.2 3.1 7.7 0 M470.4 628.0 q3.7 3.1 7.7 0" fill="none" stroke="#3c8ce8" stroke-width="1.600"/><path d="M469.5 618 v2.2" stroke="#f4f4f4" stroke-width="1"/></g><g><rect x="463" y="639" width="14" height="9.500" rx="1" fill="#4c9ce8"/><circle cx="470" cy="643.500" r="2.500" fill="#8cc4f4"/><rect x="460" y="645" width="3.500" height="9" fill="#3c8ce0"/><path d="M463.500 647 h5 l3 -1.500 h6 l0.500 1.500 l-6 6 h-8.500z" fill="#f4c050"/></g><g><rect x="462" y="665" width="14.500" height="11" rx="1.500" fill="#a0522d"/><rect x="462" y="665" width="14.500" height="3" rx="1.500" fill="#7c3c1c"/><rect x="471" y="669" width="5.500" height="4" rx="1" fill="#c87840"/><circle cx="473.500" cy="671" r="0.900" fill="#5a2a10"/></g><g fill="#4c8ce0"><rect x="939.500" y="507.500" width="1.300" height="4.500"/><rect x="942.500" y="505.500" width="1.300" height="6.500"/><rect x="945.500" y="503.500" width="1.300" height="8.500"/><rect x="948.500" y="501.500" width="1.300" height="10.500"/><rect x="951.300" y="500" width="1.300" height="12"/></g>
<path d="M939 506.500 l6 -3.500 l6 -4" fill="none" stroke="#7cd8b0" stroke-width="1"/></svg>
</body></html>
